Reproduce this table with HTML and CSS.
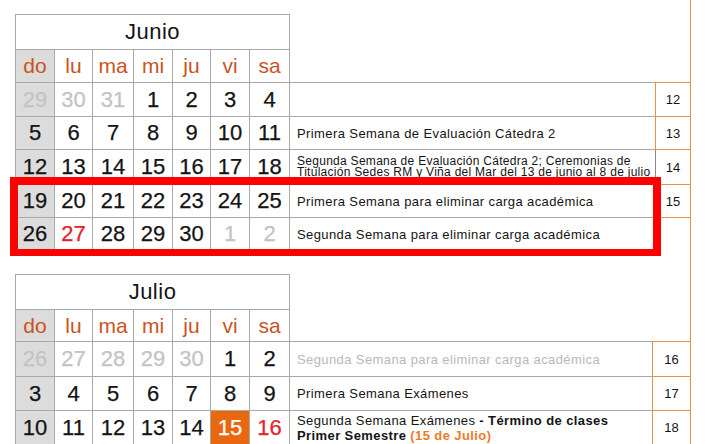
FILE: index.html
```html
<!DOCTYPE html>
<html lang="es">
<head>
<meta charset="utf-8">
<title>Calendario académico</title>
<link rel="stylesheet" href="styles.css">
</head>
<body>
<div class="page">
  <section class="month junio">
    <div class="title">Junio</div>
    <div class="void"></div><div class="void"></div>

    <div class="dow sun">do</div><div class="dow">lu</div><div class="dow">ma</div><div class="dow">mi</div><div class="dow">ju</div><div class="dow">vi</div><div class="dow">sa</div>
    <div class="gap"></div><div class="gap wkgap"></div>

    <div class="d sun out">29</div><div class="d out">30</div><div class="d out">31</div><div class="d">1</div><div class="d">2</div><div class="d">3</div><div class="d">4</div>
    <div class="note"><span></span></div><div class="wk">12</div>

    <div class="d sun">5</div><div class="d">6</div><div class="d">7</div><div class="d">8</div><div class="d">9</div><div class="d">10</div><div class="d">11</div>
    <div class="note"><span>Primera Semana de Evaluación Cátedra 2</span></div><div class="wk">13</div>

    <div class="d sun">12</div><div class="d">13</div><div class="d">14</div><div class="d">15</div><div class="d">16</div><div class="d">17</div><div class="d">18</div>
    <div class="note small"><span>Segunda Semana de Evaluación Cátedra 2; Ceremonias de Titulación Sedes RM y Viña del Mar del 13 de junio al 8 de julio</span></div><div class="wk grey">14</div>

    <div class="d sun">19</div><div class="d">20</div><div class="d">21</div><div class="d">22</div><div class="d">23</div><div class="d">24</div><div class="d">25</div>
    <div class="note"><span>Primera Semana para eliminar carga académica</span></div><div class="wk">15</div>

    <div class="d sun">26</div><div class="d red">27</div><div class="d">28</div><div class="d">29</div><div class="d">30</div><div class="d out">1</div><div class="d out">2</div>
    <div class="note"><span>Segunda Semana para eliminar carga académica</span></div><div class="wk none"></div>
  </section>

  <section class="month julio">
    <div class="title">Julio</div>
    <div class="void"></div><div class="void"></div>

    <div class="dow sun">do</div><div class="dow">lu</div><div class="dow">ma</div><div class="dow">mi</div><div class="dow">ju</div><div class="dow">vi</div><div class="dow">sa</div>
    <div class="gap"></div><div class="gap wkgap"></div>

    <div class="d sun out">26</div><div class="d out">27</div><div class="d out">28</div><div class="d out">29</div><div class="d out">30</div><div class="d">1</div><div class="d">2</div>
    <div class="note muted"><span>Segunda Semana para eliminar carga académica</span></div><div class="wk">16</div>

    <div class="d sun">3</div><div class="d">4</div><div class="d">5</div><div class="d">6</div><div class="d">7</div><div class="d">8</div><div class="d">9</div>
    <div class="note"><span>Primera Semana Exámenes</span></div><div class="wk">17</div>

    <div class="d sun">10</div><div class="d">11</div><div class="d">12</div><div class="d">13</div><div class="d">14</div><div class="d hot">15</div><div class="d red">16</div>
    <div class="note two">
      <p class="line">Segunda Semana Exámenes <b>- Término de clases</b></p>
      <p class="line"><b>Primer Semestre</b> <b class="date">(15 de Julio)</b></p>
    </div><div class="wk">18</div>
  </section>

  <div class="mark"></div>
</div>
</body>
</html>
```

FILE: styles.css
```css
* {
  box-sizing: border-box;
  margin: 0;
  padding: 0;
}

html,
body {
  background: #fff;
}

body {
  width: 708px;
  height: 444px;
  overflow: hidden;
  font-family: "Liberation Sans", Arial, sans-serif;
  color: #141414;
}

.page {
  position: relative;
  width: 691px;
  height: 444px;
  padding: 14px 0 0 15px;
  border-right: 1px solid #ec8f45;
}

.month {
  display: grid;
  grid-template-columns: 40px 38px 41px 39px 38px 39px 40px 365px 35px;
}

.junio {
  grid-template-rows: 36px 33px 34px 33px 35px 33px 33px;
}

.julio {
  margin-top: 23px;
  grid-template-rows: 36px 32px 35px 34px 34px;
  grid-template-columns: 40px 38px 41px 39px 38px 39px 40px 362px 38px;
}

.title {
  grid-column: 1 / 8;
  border: 1px solid #a9a9a9;
  font-size: 22px;
  letter-spacing: 0.5px;
  display: flex;
  align-items: center;
  justify-content: center;
}

.dow,
.d {
  border-right: 1px solid #a9a9a9;
  border-bottom: 1px solid #a9a9a9;
  display: flex;
  align-items: center;
  justify-content: center;
}

.dow {
  font-size: 21px;
  color: #c9541f;
}

.d {
  font-size: 22px;
  -webkit-text-stroke: 0.25px currentColor;
}

.sun {
  border-left: 1px solid #a9a9a9;
  background: #dcdcdc;
}

.out {
  color: #c3c3c3;
}

.red {
  color: #e3232b;
}

.hot {
  background: #e8670f;
  color: #fff;
}

.gap {
  border-bottom: 1px solid #a9a9a9;
}

.wkgap {
  border-bottom-color: #ec8f45;
}

.note {
  border-bottom: 1px solid #a9a9a9;
  padding-left: 7px;
  font-size: 13px;
  letter-spacing: 0.4px;
  display: flex;
  align-items: center;
  overflow: hidden;
  white-space: nowrap;
}

.note.small {
  font-size: 12px;
  line-height: 11px;
  letter-spacing: 0.28px;
  white-space: normal;
  padding-right: 4px;
}

.note.two {
  flex-direction: column;
  align-items: flex-start;
  justify-content: center;
  line-height: 15px;
}

.note.muted {
  color: #b8b8b8;
}

.date {
  color: #f07a2a;
}

.wk {
  border-left: 1px solid #ec8f45;
  border-bottom: 1px solid #ec8f45;
  font-size: 13px;
  display: flex;
  align-items: center;
  justify-content: center;
}

.wk.grey {
  border-left-color: #8a8a8a;
}

.wk.none {
  border: 0;
}

.mark {
  position: absolute;
  left: 10px;
  top: 177px;
  width: 651px;
  height: 79px;
  border: 8px solid #f00;
  border-bottom-width: 7px;
  pointer-events: none;
}
```
